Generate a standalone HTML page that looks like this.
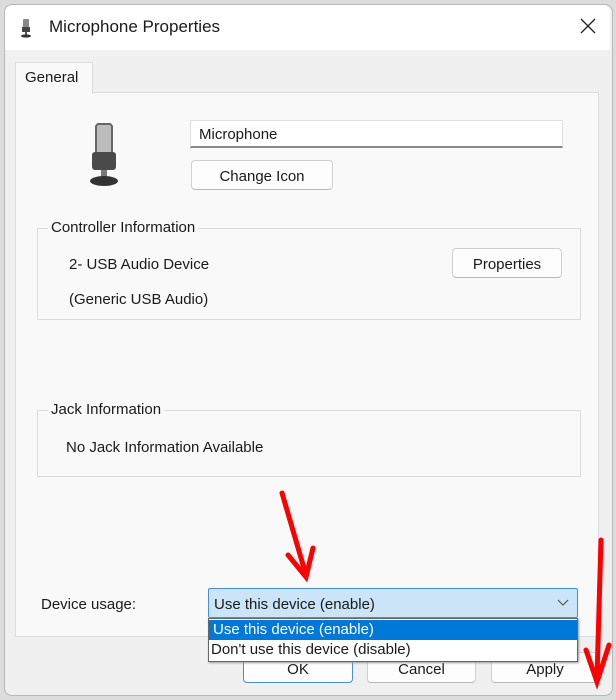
<!DOCTYPE html>
<html><head><style>
body{margin:0;width:616px;height:700px;background:#dcdcdc;position:relative;overflow:hidden;font-family:"Liberation Sans",sans-serif;font-size:15px;color:#1a1a1a}
.a{position:absolute}
.win{left:4px;top:4px;width:607px;height:690px;background:#f0f0f0;border:1px solid #b8b8b8;border-radius:8px;overflow:hidden}
.btn{position:absolute;background:#fdfdfd;border:1px solid #d0d0d0;border-bottom-color:#b8b8b8;border-radius:4px;text-align:center;box-sizing:border-box}
.grp{position:absolute;border:1px solid #dcdcdc;box-sizing:border-box}
.lg{position:absolute;top:-10px;left:10px;background:#f9f9f9;padding:0 3px}
</style></head><body>
<div class="a win"></div>
<div class="a" style="left:5px;top:5px;width:605px;height:45px;background:#fff;border-radius:8px 8px 0 0"></div>
<svg class="a" style="left:19px;top:18px" width="14" height="20" viewBox="0 0 14 20"><rect x="4" y="1" width="6" height="10" rx="1" fill="#888"/><rect x="3" y="9" width="8" height="5" fill="#444"/><rect x="6" y="14" width="2" height="3" fill="#555"/><ellipse cx="7" cy="18" rx="5" ry="1.6" fill="#333"/></svg>
<div class="a" style="left:49px;top:17px;font-size:17px">Microphone Properties</div>
<svg class="a" style="left:580px;top:18px" width="16" height="16" viewBox="0 0 16 16"><path d="M1 1L15 15M15 1L1 15" stroke="#222" stroke-width="1.3"/></svg>
<div class="a" style="left:15px;top:92px;width:584px;height:545px;background:#f9f9f9;border:1px solid #dcdcdc;box-sizing:border-box"></div>
<div class="a" style="left:15px;top:62px;width:78px;height:32px;background:#f9f9f9;border:1px solid #dcdcdc;border-bottom:none;box-sizing:border-box;padding:6px 0 0 9px">General</div>
<svg class="a" style="left:84px;top:120px" width="40" height="68" viewBox="0 0 40 68"><rect x="12" y="4" width="16" height="34" rx="3" fill="#bdbdbd" stroke="#666" stroke-width="2"/><rect x="8" y="32" width="24" height="18" rx="3" fill="#4a4a4a"/><rect x="17" y="50" width="6" height="8" fill="#777"/><ellipse cx="20" cy="61" rx="14" ry="5" fill="#333"/></svg>
<div class="a" style="left:190px;top:120px;width:373px;height:28px;background:#fff;border:1px solid #e0e0e0;border-bottom:2px solid #888;box-sizing:border-box;padding:5px 8px">Microphone</div>
<div class="btn" style="left:191px;top:160px;width:142px;height:30px;padding-top:7px">Change Icon</div>
<div class="grp" style="left:37px;top:228px;width:544px;height:92px"><div class="lg">Controller Information</div></div>
<div class="a" style="left:69px;top:256px">2- USB Audio Device</div>
<div class="a" style="left:69px;top:291px">(Generic USB Audio)</div>
<div class="btn" style="left:452px;top:248px;width:110px;height:30px;padding-top:7px">Properties</div>
<div class="grp" style="left:37px;top:410px;width:544px;height:67px"><div class="lg">Jack Information</div></div>
<div class="a" style="left:66px;top:439px">No Jack Information Available</div>
<div class="a" style="left:41px;top:596px">Device usage:</div>
<div class="a" style="left:208px;top:588px;width:370px;height:30px;background:#cce4f7;border:1px solid #4a8fd0;box-sizing:border-box;padding:7px 5px;border-radius:2px">Use this device (enable)</div>
<svg class="a" style="left:557px;top:599px" width="12" height="8" viewBox="0 0 12 8"><path d="M1 1L6 6L11 1" stroke="#555" fill="none" stroke-width="1.2"/></svg>
<div class="btn" style="left:243px;top:652px;width:110px;height:31px;padding-top:8px;border-color:#4a8fd0">OK</div>
<div class="btn" style="left:367px;top:652px;width:109px;height:31px;padding-top:8px">Cancel</div>
<div class="btn" style="left:491px;top:652px;width:108px;height:31px;padding-top:8px">Apply</div>
<div class="a" style="left:208px;top:618px;width:370px;height:44px;background:#fff;border:1px solid #666;box-sizing:border-box;box-shadow:1px 1px 2px #999">
<div style="background:#0078d7;color:#fff;height:20px;margin-top:1px;padding-left:4px;line-height:20px">Use this device (enable)</div>
<div style="padding-left:2px;line-height:20px">Don't use this device (disable)</div></div>
<svg class="a" style="left:0;top:0" width="616" height="700"><g stroke="#f00" stroke-width="5" stroke-linecap="round" fill="none"><path d="M282 493L306 575"/><path d="M288 555L306 577L313 548"/><path d="M601 540L597 678"/><path d="M586 650L597 682L609 645"/></g></svg>
</body></html>
